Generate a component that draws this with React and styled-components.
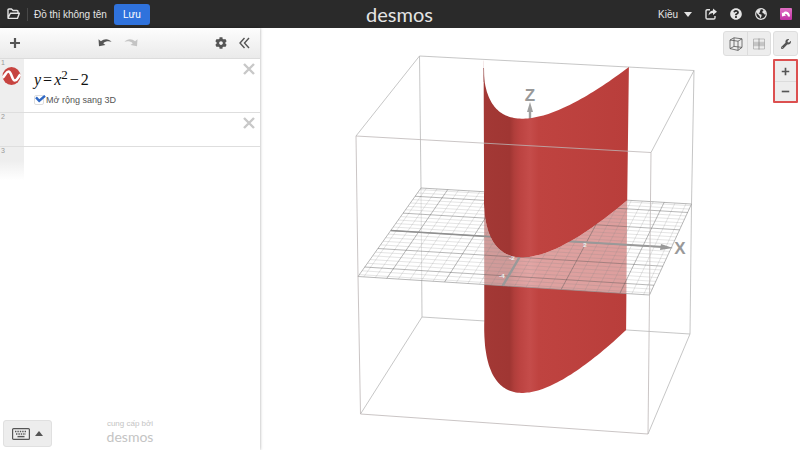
import React, { useState } from "react";
import styled, { createGlobalStyle } from "styled-components";
import { FaCog, FaQuestionCircle, FaWrench } from "react-icons/fa";

const GlobalStyle = createGlobalStyle`
  * {
    box-sizing: border-box;
  }
  body {
    margin: 0;
    background: #fff;
    font-family: "Liberation Sans", Arial, sans-serif;
    font-size: 10px;
  }
  button {
    font: inherit;
    color: inherit;
    padding: 0;
    border: 0;
    background: none;
    cursor: pointer;
  }
  svg {
    display: block;
  }
`;

const Page = styled.div`
  display: flex;
  flex-direction: column;
  height: 100vh;
`;

/* header */

const Header = styled.header`
  display: grid;
  grid-template-columns: 1fr auto 1fr;
  align-items: center;
  height: 28px;
  padding: 0 8px 0 7px;
  background: #2a2a2a;
  color: #e4e4e4;
`;

const HeaderSide = styled.div`
  display: flex;
  align-items: center;
  justify-content: ${(props) => (props.$end ? "flex-end" : "flex-start")};
  gap: ${(props) => (props.$end ? "13px" : "7px")};
`;

const IconButton = styled.button`
  display: flex;
  align-items: center;
  justify-content: center;
  color: ${(props) => props.$color || "inherit"};
`;

const Title = styled.h1`
  margin: 0;
  padding-left: 6px;
  border-left: 1px solid #484848;
  font-size: 10px;
  font-weight: normal;
  line-height: 13px;
`;

const SaveButton = styled.button`
  width: 36px;
  height: 21px;
  border-radius: 3px;
  background: #2f72dc;
  color: #fff;
`;

const Logo = styled.span`
  font-family: Lato, sans-serif;
  font-size: ${(props) => (props.$small ? "14px" : "20px")};
  line-height: ${(props) => (props.$small ? "17px" : "24px")};
`;

const UserButton = styled.button`
  display: flex;
  align-items: center;
  gap: 6px;
`;

/* expression list */

const Main = styled.main`
  display: flex;
  flex: 1;
  min-height: 0;
`;

const Panel = styled.section`
  display: flex;
  flex-direction: column;
  flex: 0 0 260px;
  background: #fff;
  box-shadow: 0 0 3px rgba(0, 0, 0, 0.35);
  z-index: 1;
`;

const Toolbar = styled.div`
  display: grid;
  grid-template-columns: 4fr auto 5fr;
  align-items: center;
  height: 31px;
  padding: 0 10px 0 9px;
  background: linear-gradient(#fdfdfd, #eaeaea);
  border-bottom: 1px solid #dcdcdc;
  color: #555;
`;

const ToolGroup = styled.div`
  display: flex;
  align-items: center;
  justify-content: ${(props) => (props.$end ? "flex-end" : "flex-start")};
  gap: 12px;
`;

const List = styled.ol`
  flex: 1;
  margin: 0;
  padding: 0;
  list-style: none;
`;

const Row = styled.li`
  display: flex;
  height: ${(props) => (props.$tall ? "54px" : "34px")};
  border-bottom: 1px solid ${(props) => (props.$last ? "transparent" : "#dedede")};
`;

const Gutter = styled.div`
  flex: 0 0 24px;
  padding: 0 1px;
  background: ${(props) =>
    props.$last ? "linear-gradient(#eee 40%, #fff)" : "#eee"};
  color: #999;
  font-size: 7px;
  line-height: 8px;
`;

const Content = styled.div`
  flex: 1;
  padding: 8px 0 0 10px;
`;

const Formula = styled.div`
  font-family: "Liberation Serif", "Times New Roman", serif;
  font-size: 16px;
  line-height: 26px;
  color: #111;
  sup {
    font-size: 13px;
    line-height: 0;
  }
`;

const Op = styled.span`
  margin: 0 2px;
`;

const Extend = styled.label`
  display: flex;
  align-items: center;
  gap: 2px;
  padding-top: 1px;
  color: #555;
  font-size: 9px;
  line-height: 12px;
`;

const Tick = styled.span`
  position: relative;
  width: 10px;
  height: 10px;
  input {
    appearance: none;
    display: block;
    width: 10px;
    height: 10px;
    margin: 0;
    border: 1px solid #ddd;
    border-radius: 2px;
    background: #fff;
  }
  svg {
    position: absolute;
    left: 1px;
    top: 0;
    display: none;
    pointer-events: none;
  }
  input:checked + svg {
    display: block;
  }
`;

const Remove = styled.button`
  align-self: flex-start;
  padding: 4px 5px;
  color: #c8c8c8;
`;

const Footer = styled.footer`
  display: grid;
  grid-template-columns: 1fr auto 1fr;
  align-items: end;
  padding: 0 3px 3px;
`;

const KeypadButton = styled.button`
  display: flex;
  align-items: center;
  justify-content: center;
  gap: 5px;
  width: 49px;
  height: 27px;
  border: 1px solid #e0e0e0;
  border-radius: 3px;
  background: #ededed;
  color: #555;
`;

const Powered = styled.div`
  display: flex;
  flex-direction: column;
  align-items: center;
  padding-bottom: 2px;
  color: #c4c4c4;
  font-size: 8px;
  line-height: 9px;
`;

/* graph */

const Graph = styled.section`
  position: relative;
  flex: 1;
  min-width: 0;
`;

const Scene = styled.svg`
  width: 100%;
  height: 100%;
`;

const Controls = styled.div`
  position: absolute;
  top: 3px;
  right: 2px;
  display: flex;
  align-items: flex-start;
  gap: 2px;
`;

const Column = styled.div`
  display: flex;
  flex-direction: column;
  gap: 3px;
`;

const Group = styled.div`
  display: flex;
  flex-direction: ${(props) => (props.$column ? "column" : "row")};
  border: ${(props) => (props.$marked ? "2px solid #dc5050" : "1px solid #dedede")};
  border-radius: ${(props) => (props.$marked ? "1px" : "3px")};
  background: #ededed;
  button + button {
    border-${(props) => (props.$column ? "top" : "left")}: 1px solid #dcdcdc;
  }
`;

const ControlButton = styled.button`
  display: flex;
  align-items: center;
  justify-content: center;
  width: ${(props) => (props.$narrow ? "21px" : "23px")};
  height: ${(props) => (props.$narrow ? "20px" : "23px")};
  color: #555;
`;

// maps (x, y) in [-5, 5] to the screen, corners: back left, back right, front right, front left
function makePlane([p0, p1, p2, p3]) {
  const dx1 = p1[0] - p2[0];
  const dx2 = p3[0] - p2[0];
  const dy1 = p1[1] - p2[1];
  const dy2 = p3[1] - p2[1];
  const sx = p0[0] - p1[0] + p2[0] - p3[0];
  const sy = p0[1] - p1[1] + p2[1] - p3[1];
  const det = dx1 * dy2 - dx2 * dy1;
  const g = (sx * dy2 - dx2 * sy) / det;
  const h = (dx1 * sy - sx * dy1) / det;
  return (x, y) => {
    const u = (x + 5) / 10;
    const v = (5 - y) / 10;
    const w = g * u + h * v + 1;
    return [
      ((p1[0] - p0[0] + g * p1[0]) * u + (p3[0] - p0[0] + h * p3[0]) * v + p0[0]) / w,
      ((p1[1] - p0[1] + g * p1[1]) * u + (p3[1] - p0[1] + h * p3[1]) * v + p0[1]) / w,
    ];
  };
}

const topCorners = [[419.5, 56], [694, 70.5], [651, 152.5], [356, 136]];
const midCorners = [[421, 188], [691.5, 204], [649.5, 295], [358, 276.5]];
const lowCorners = [[422, 317], [690, 334], [648, 434], [360.5, 414]];
const topPlane = makePlane(topCorners);
const midPlane = makePlane(midCorners);
const lowPlane = makePlane(lowCorners);

const EDGE = Math.sqrt(7);
const curve = (plane) =>
  Array.from({ length: 81 }, (_, i) => {
    const x = -EDGE + (2 * EDGE * i) / 80;
    return plane(x, x * x - 2);
  });

const str = (points) => points.map((p) => p.map((n) => n.toFixed(1)).join(",")).join(" ");
const band = (a, b) => str([...curve(a), ...curve(b).reverse()]);

function Line({ from, to, ...rest }) {
  return <line x1={from[0]} y1={from[1]} x2={to[0]} y2={to[1]} {...rest} />;
}

function Grid() {
  const lines = [];
  for (let i = -12; i <= 12; i++) {
    const t = i * 0.4;
    const major = i % 5 === 0;
    const stroke = major ? "#555" : "#888";
    const opacity = major ? 0.7 : 0.36;
    const common = { stroke, opacity, strokeWidth: 0.6 };
    lines.push(<Line key={"x" + i} from={midPlane(t, 5)} to={midPlane(t, -5)} {...common} />);
    lines.push(<Line key={"y" + i} from={midPlane(-5, t)} to={midPlane(5, t)} {...common} />);
  }
  return <g>{lines}</g>;
}

function Plot() {
  return (
    <Scene viewBox="260 28 540 422" role="img" aria-label="y = x² − 2">
      <defs>
        <linearGradient id="red" gradientUnits="userSpaceOnUse" x1="484" y1="0" x2="628" y2="0">
          <stop offset="0" stopColor="#a33835" />
          <stop offset="0.18" stopColor="#a03633" />
          <stop offset="0.21" stopColor="#b03e3b" />
          <stop offset="0.25" stopColor="#bc4341" />
          <stop offset="0.32" stopColor="#c54c4a" />
          <stop offset="0.38" stopColor="#bf4340" />
          <stop offset="1" stopColor="#b93e3b" />
        </linearGradient>
      </defs>

      {/* back of the box */}
      <g stroke="#b8b8b8" strokeWidth="0.8" fill="none">
        <polyline points={str([topCorners[3], topCorners[0], topCorners[1], topCorners[2]])} />
        <polyline points={str([lowCorners[3], lowCorners[0], lowCorners[1], lowCorners[2]])} />
        <polyline points={str([topCorners[0], midCorners[0], lowCorners[0]])} />
        <polyline points={str([topCorners[1], midCorners[1], lowCorners[1]])} />
      </g>

      <polygon points={band(midPlane, lowPlane)} fill="url(#red)" />

      {/* z = 0 */}
      <polygon points={str(midCorners)} fill="#fff" fillOpacity="0.5" stroke="#999" strokeWidth="0.7" />
      <Grid />
      <Line from={midPlane(-5, 0)} to={midPlane(0, 0)} stroke="#909090" strokeWidth="1.6" />
      <Line from={midPlane(0, 0)} to={[664, 247]} stroke="#999" strokeWidth="2" />
      <polygon points="661,244 673,248 660,250" fill="#999" />
      <Line from={midPlane(0, 0)} to={midPlane(0, -5)} stroke="#999" strokeWidth="2.4" />
      <g fill="#fff" stroke="#ccc" strokeWidth="0.2" fontSize="6" fontWeight="bold" textAnchor="middle">
        <text x="585" y="247">2</text>
        <text x="512" y="260">-2</text>
        <text x="502" y="278">-4</text>
      </g>

      {/* z axis */}
      <line x1="530" y1="125" x2="530" y2="110" stroke="#a0a0a0" strokeWidth="2.4" />
      <polygon points="530,102 533,112 527,112" fill="#a0a0a0" />

      <polygon points={band(topPlane, midPlane)} fill="url(#red)" />
      <Line from={[483.5, 68]} to={[484, 82]} stroke="#a86b69" strokeWidth="0.8" />

      {/* front of the box */}
      <g stroke="#bcb6b6" strokeWidth="0.8" fill="none">
        <Line from={topCorners[3]} to={topCorners[2]} />
        <Line from={lowCorners[3]} to={lowCorners[2]} />
        <polyline points={str([topCorners[3], midCorners[3], lowCorners[3]])} />
        <polyline points={str([topCorners[2], midCorners[2], lowCorners[2]])} />
      </g>

      <g fill="#999" fontFamily="Liberation Sans, sans-serif" fontWeight="bold" fontSize="17" textAnchor="middle">
        <text x="530" y="101">Z</text>
        <text x="680" y="254">X</text>
      </g>
    </Scene>
  );
}

function Plus({ size = 12, minus }) {
  return (
    <svg width={size} height={size} viewBox="0 0 12 12" stroke="currentColor" strokeWidth="2.2">
      <path d={minus ? "M1 6H11" : "M1 6H11M6 1V11"} />
    </svg>
  );
}

function Cross() {
  return (
    <svg width="12" height="12" viewBox="0 0 12 12" stroke="currentColor" strokeWidth="2.4">
      <path d="M1 1L11 11M11 1L1 11" />
    </svg>
  );
}

function Undo({ flip }) {
  return (
    <svg width="14" height="10" viewBox="0 0 14 10" fill="currentColor">
      <g transform={flip ? "matrix(-1 0 0 1 14 0)" : undefined}>
        <path d="M0.5 1.2L1 8.2L7.4 6.9L5.2 5.2C7.6 3.1 10.6 2.7 13.6 3.8C10.8 0.5 6.2 0.3 2.9 3.2Z" />
      </g>
    </svg>
  );
}

function Caret({ up }) {
  return (
    <svg width="8" height="5" viewBox="0 0 8 5" fill="currentColor">
      <path d={up ? "M0 5L4 0L8 5Z" : "M0 0H8L4 5Z"} />
    </svg>
  );
}

export default function App() {
  const [extended, setExtended] = useState(true);

  return (
    <Page>
      <GlobalStyle />
      <Header>
        <HeaderSide>
          <IconButton aria-label="Open">
            <svg width="13" height="12" viewBox="0 0 13 12" fill="none" stroke="currentColor" strokeWidth="1.4" strokeLinejoin="round">
              <path d="M1 9.5V2Q1 1 2 1H4.5L6 2.5H10Q11 2.5 11 3.5V5M1 10L3.4 5.2H12.4L10.4 10.4H1.4Z" />
            </svg>
          </IconButton>
          <Title>Đồ thị không tên</Title>
          <SaveButton>Lưu</SaveButton>
        </HeaderSide>
        <Logo>desmos</Logo>
        <HeaderSide $end>
          <UserButton>
            Kiều <Caret />
          </UserButton>
          <IconButton aria-label="Share">
            <svg width="12" height="12" viewBox="0 0 12 12" fill="none" stroke="currentColor" strokeWidth="1.4">
              <path d="M5 1.7H2.3Q1 1.7 1 3V9.7Q1 11 2.3 11H8.7Q10 11 10 9.7V8" />
              <path d="M8 0.4L12 3.7L8 7V5.1Q5 4.9 3.5 7.6Q3.8 2.8 8 2.4Z" fill="currentColor" stroke="none" />
            </svg>
          </IconButton>
          <IconButton aria-label="Help">
            <FaQuestionCircle size={12} />
          </IconButton>
          <IconButton aria-label="Language">
            <svg width="12" height="12" viewBox="0 0 12 12">
              <circle cx="6" cy="6" r="5.3" fill="none" stroke="currentColor" strokeWidth="1.2" />
              <path d="M1.2 4L3 1.4L5.4 1L5.8 2L4.8 3L5.2 4.2L3.6 5L4.6 6L6.6 6.8L6.4 8.6L5.2 10.4L4.6 8L2.4 5.8ZM8 1.6L10.4 3.2L11 6L9.8 6.8L9 5.4L7.6 5L7.2 3.6L8.4 3Z" fill="currentColor" />
            </svg>
          </IconButton>
          <IconButton aria-label="Account">
            <svg width="12" height="12" viewBox="0 0 12 12">
              <defs>
                <linearGradient id="pink" x2="0" y2="1">
                  <stop offset="0" stopColor="#e070c4" />
                  <stop offset="1" stopColor="#c030a4" />
                </linearGradient>
              </defs>
              <rect width="12" height="12" rx="1" fill="url(#pink)" />
              <path d="M1.8 4.2L3 5.2Q4 3 6 3.6Q9.8 4 10 8.6H8Q7.6 6.2 5.8 5.8L4.8 6.4L6 7.6L2 8.4Z" fill="#fff" />
            </svg>
          </IconButton>
        </HeaderSide>
      </Header>

      <Main>
        <Panel>
          <Toolbar>
            <ToolGroup>
              <IconButton aria-label="Add">
                <Plus />
              </IconButton>
            </ToolGroup>
            <ToolGroup>
              <IconButton aria-label="Undo">
                <Undo />
              </IconButton>
              <IconButton aria-label="Redo" $color="#c4c4c4">
                <Undo flip />
              </IconButton>
            </ToolGroup>
            <ToolGroup $end>
              <IconButton aria-label="Settings">
                <FaCog size={12} />
              </IconButton>
              <IconButton aria-label="Collapse">
                <svg width="11" height="12" viewBox="0 0 11 12" fill="none" stroke="currentColor" strokeWidth="1.4">
                  <path d="M5.5 1L1 6L5.5 11M10 1L5.5 6L10 11" />
                </svg>
              </IconButton>
            </ToolGroup>
          </Toolbar>

          <List>
            <Row $tall>
              <Gutter>
                1
                <svg width="20" height="18" viewBox="0 0 20 18">
                  <circle cx="10.5" cy="9" r="9" fill="#c74440" />
                  <path d="M1.5 10.5C4 9.5 4.8 4.5 7.5 4.5C10.5 4.5 11 13.5 13.8 13.5C16.5 13.5 17 9.5 19.5 7.5" fill="none" stroke="#fff" strokeWidth="2.6" />
                </svg>
              </Gutter>
              <Content>
                <Formula>
                  <i>y</i>
                  <Op>=</Op>
                  <i>x</i>
                  <sup>2</sup>
                  <Op>−</Op>2
                </Formula>
                <Extend>
                  <Tick>
                    <input
                      type="checkbox"
                      checked={extended}
                      onChange={() => setExtended(!extended)}
                    />
                    <svg width="11" height="8" viewBox="0 0 11 8" fill="none" stroke="#2f68c4" strokeWidth="2.4">
                      <path d="M1 2.4L4.2 5.8L10 0.8" />
                    </svg>
                  </Tick>
                  Mở rộng sang 3D
                </Extend>
              </Content>
              <Remove aria-label="Remove 1">
                <Cross />
              </Remove>
            </Row>
            <Row>
              <Gutter>2</Gutter>
              <Content />
              <Remove aria-label="Remove 2">
                <Cross />
              </Remove>
            </Row>
            <Row $last>
              <Gutter $last>3</Gutter>
            </Row>
          </List>

          <Footer>
            <KeypadButton aria-label="Keypad">
              <svg width="18" height="12" viewBox="0 0 18 12" fill="none" stroke="currentColor">
                <rect x="0.6" y="0.6" width="16.8" height="10.8" rx="1" strokeWidth="1.2" />
                <path d="M3 3.5H15M4 6H14" strokeWidth="1.4" strokeDasharray="1.4 1" />
                <path d="M5.5 8.6H12.5" strokeWidth="1.4" />
              </svg>
              <Caret up />
            </KeypadButton>
            <Powered>
              <span>cung cấp bởi</span>
              <Logo $small>desmos</Logo>
            </Powered>
          </Footer>
        </Panel>

        <Graph>
          <Plot />
          <Controls>
            <Group>
              <ControlButton aria-label="Box">
                <svg width="14" height="14" viewBox="0 0 14 14" fill="none" stroke="currentColor" strokeWidth="0.8">
                  <path d="M1 3L9 4.2V13.4L1 11.6ZM1 3L5 0.8L13 1.8L9 4.2M13 1.8V10.4L9 13.4M5 0.8V9.4L13 10.4M5 9.4L1 11.6" />
                </svg>
              </ControlButton>
              <ControlButton aria-label="Plane">
                <svg width="12" height="12" viewBox="0 0 12 12" fill="none" stroke="#888" strokeWidth="0.8">
                  <path d="M0.5 1H11.5V11H0.5ZM0.5 4.3H11.5M0.5 7.7H11.5" opacity="0.6" />
                  <path d="M6 0.5V11.5M0.5 6H11.5" />
                </svg>
              </ControlButton>
            </Group>
            <Column>
              <Group>
                <ControlButton aria-label="Graph settings">
                  <FaWrench size={10} />
                </ControlButton>
              </Group>
              <Group $column $marked>
                <ControlButton $narrow aria-label="Zoom in">
                  <Plus size={9} />
                </ControlButton>
                <ControlButton $narrow aria-label="Zoom out">
                  <Plus size={9} minus />
                </ControlButton>
              </Group>
            </Column>
          </Controls>
        </Graph>
      </Main>
    </Page>
  );
}
